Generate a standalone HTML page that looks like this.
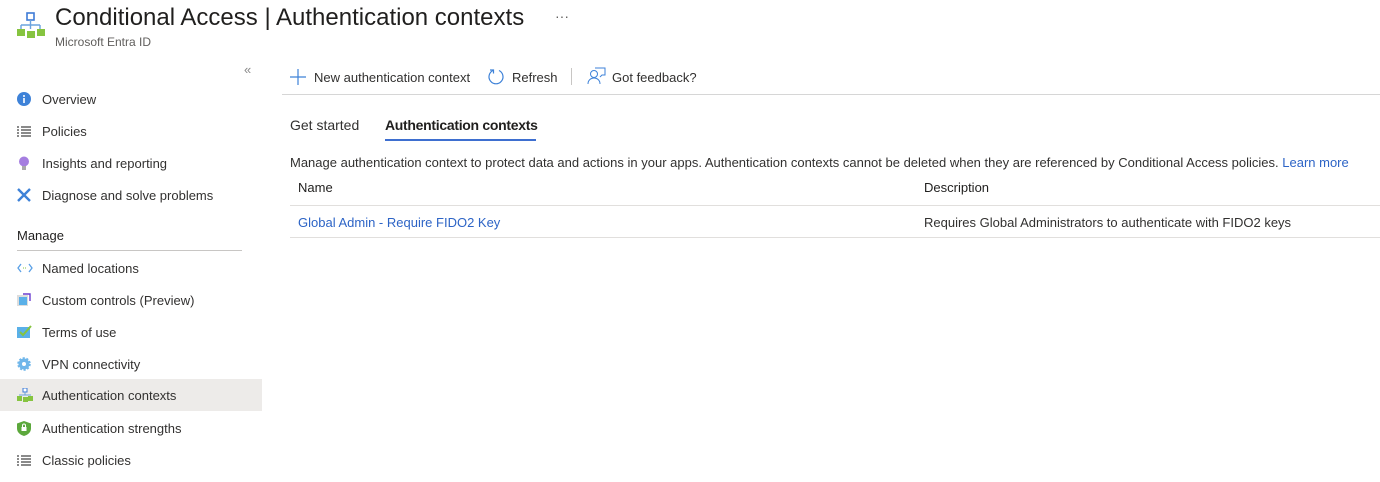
<!DOCTYPE html>
<html><head><style>
*{margin:0;padding:0;box-sizing:border-box}
body{width:1380px;height:482px;background:#fff;font-family:"Liberation Sans",sans-serif;color:#323130;position:relative;overflow:hidden;font-size:13px}
.a{position:absolute;white-space:nowrap}
.nav{position:absolute;left:0;width:262px;height:32px;}
.nav span{position:absolute;left:42px;top:9px;font-size:13px}
.nav svg{position:absolute;left:17px;top:9px}
.link{color:#2d64c6}
</style></head><body>
<svg class="a" style="left:17px;top:12px" width="28" height="28" viewBox="0 0 28 28">
<rect x="10" y="1" width="7" height="7" fill="#fff" stroke="#3e7bd6" stroke-width="1.6"/>
<path d="M13.5 8v5M4 13h19M4 13v4M13.5 13v4M23 13v4" stroke="#6aa3dd" stroke-width="1.4" fill="none"/>
<rect x="0" y="17" width="8" height="7" fill="#86c440"/><rect x="10" y="19" width="8" height="7" fill="#86c440"/><rect x="20" y="17" width="8" height="7" fill="#86c440"/>
</svg>
<div class="a" style="left:55px;top:4px;font-size:24px;color:#201f1e">Conditional Access <span style="font-weight:300">| Authentication contexts</span></div>
<div class="a" style="left:555px;top:8px;font-size:14px;color:#605e5c">···</div>
<div class="a" style="left:55px;top:35px;font-size:12px;color:#605e5c">Microsoft Entra ID</div>
<div class="a" style="left:244px;top:62px;font-size:13px;color:#888">«</div>

<div class="nav" style="top:83px"><svg width="14" height="14"><circle cx="7" cy="7" r="7" fill="#3e82d8"/><rect x="6.2" y="6" width="1.6" height="5" fill="#fff"/><circle cx="7" cy="4" r="1" fill="#fff"/></svg><span>Overview</span></div>
<div class="nav" style="top:115px"><svg width="14" height="14"><path d="M0 3h2M4 3h10M0 6h2M4 6h10M0 9h2M4 9h10M0 12h2M4 12h10" stroke="#444" stroke-width="1.2"/></svg><span>Policies</span></div>
<div class="nav" style="top:147px"><svg width="14" height="16"><circle cx="7" cy="5.5" r="5" fill="#a57ee0"/><rect x="5" y="10" width="4" height="4" fill="#aaa"/></svg><span>Insights and reporting</span></div>
<div class="nav" style="top:179px"><svg width="14" height="14"><path d="M1 13L13 1M1 1l12 12" stroke="#3e82d8" stroke-width="2.4"/></svg><span>Diagnose and solve problems</span></div>
<div class="a" style="left:17px;top:228px;font-size:13px;color:#201f1e">Manage</div>
<div class="a" style="left:17px;top:250px;width:225px;height:1px;background:#c8c6c4"></div>
<div class="nav" style="top:252px"><svg width="16" height="14"><path d="M4 3L1 7l3 4M12 3l3 4-3 4" stroke="#5aa0e6" fill="none" stroke-width="1.3"/><path d="M6 7h4" stroke="#86c440" stroke-dasharray="1 1"/></svg><span>Named locations</span></div>
<div class="nav" style="top:284px"><svg width="14" height="14"><rect x="0" y="2" width="11" height="11" fill="#ddd"/><rect x="2" y="4" width="8" height="8" fill="#5ab0e8"/><path d="M6 1h7v7" stroke="#6b3fcf" fill="none" stroke-width="1.4"/></svg><span>Custom controls (Preview)</span></div>
<div class="nav" style="top:316px"><svg width="16" height="14"><rect x="0" y="2" width="13" height="11" fill="#5ab0e8"/><path d="M3 7l3 3 8-9" stroke="#86c440" fill="none" stroke-width="2"/></svg><span>Terms of use</span></div>
<div class="nav" style="top:348px"><svg width="14" height="14"><circle cx="7" cy="7" r="5.5" fill="#6fb6ea" stroke="#6fb6ea" stroke-width="2.5" stroke-dasharray="2 1.5"/><circle cx="7" cy="7" r="2" fill="#fff"/></svg><span>VPN connectivity</span></div>
<div class="nav" style="top:379px;background:#edebe9"><svg width="16" height="14"><rect x="6" y="0" width="4" height="4" fill="#fff" stroke="#3e7bd6"/><path d="M8 4v3M2 7h12" stroke="#6aa3dd"/><rect x="0" y="8" width="5" height="5" fill="#86c440"/><rect x="6" y="9" width="5" height="5" fill="#86c440"/><rect x="11" y="8" width="5" height="5" fill="#86c440"/></svg><span>Authentication contexts</span></div>
<div class="nav" style="top:412px"><svg width="14" height="15"><path d="M7 0l7 2.5v5c0 4-3.5 6.5-7 7.5C3.5 14 0 11.5 0 7.5v-5z" fill="#5ca83c"/><rect x="4.5" y="6" width="5" height="4" fill="#fff"/><path d="M5.5 6V4.5a1.5 1.5 0 013 0V6" stroke="#fff" fill="none"/></svg><span>Authentication strengths</span></div>
<div class="nav" style="top:444px"><svg width="14" height="14"><path d="M0 3h2M4 3h10M0 6h2M4 6h10M0 9h2M4 9h10M0 12h2M4 12h10" stroke="#444" stroke-width="1.2"/></svg><span>Classic policies</span></div>

<svg class="a" style="left:290px;top:69px" width="16" height="16"><path d="M8 0v16M0 8h16" stroke="#3e82d8" stroke-width="1.2"/></svg>
<div class="a" style="left:314px;top:70px;font-size:13px">New authentication context</div>
<svg class="a" style="left:487px;top:68px" width="18" height="18"><path d="M6 2.5A7 7 0 1 0 12 2.5" stroke="#3e82d8" fill="none" stroke-width="1.2"/><path d="M3 2h3.5v3.5" stroke="#3e82d8" fill="none" stroke-width="1.2"/></svg>
<div class="a" style="left:512px;top:70px;font-size:13px">Refresh</div>
<div class="a" style="left:571px;top:68px;width:1px;height:17px;background:#c8c6c4"></div>
<svg class="a" style="left:587px;top:67px" width="20" height="18"><circle cx="7" cy="7" r="3.5" stroke="#3e82d8" fill="none"/><path d="M1 17c0-4 3-6 6-6s6 2 6 6" stroke="#3e82d8" fill="none"/><path d="M8 1h10v7h-3l-2 2" stroke="#3e82d8" fill="none"/></svg>
<div class="a" style="left:612px;top:70px;font-size:13px">Got feedback?</div>
<div class="a" style="left:282px;top:94px;width:1098px;height:1px;background:#d6d6d6"></div>

<div class="a" style="left:290px;top:117px;font-size:14px">Get started</div>
<div class="a" style="left:385px;top:117px;font-size:14px;color:#201f1e;font-weight:bold;letter-spacing:-0.3px">Authentication contexts</div>
<div class="a" style="left:385px;top:139px;width:151px;height:2px;background:#3e6fd0"></div>

<div class="a" style="left:290px;top:155px;font-size:13px">Manage authentication context to protect data and actions in your apps. Authentication contexts cannot be deleted when they are referenced by Conditional Access policies. <span class="link">Learn more</span></div>
<div class="a" style="left:298px;top:180px;font-size:13px;color:#201f1e">Name</div>
<div class="a" style="left:924px;top:180px;font-size:13px;color:#201f1e">Description</div>
<div class="a" style="left:290px;top:205px;width:1090px;height:1px;background:#e1dfdd"></div>
<div class="a link" style="left:298px;top:215px;font-size:13px">Global Admin - Require FIDO2 Key</div>
<div class="a" style="left:924px;top:215px;font-size:13px">Requires Global Administrators to authenticate with FIDO2 keys</div>
<div class="a" style="left:290px;top:237px;width:1090px;height:1px;background:#e1dfdd"></div>
</body></html>
